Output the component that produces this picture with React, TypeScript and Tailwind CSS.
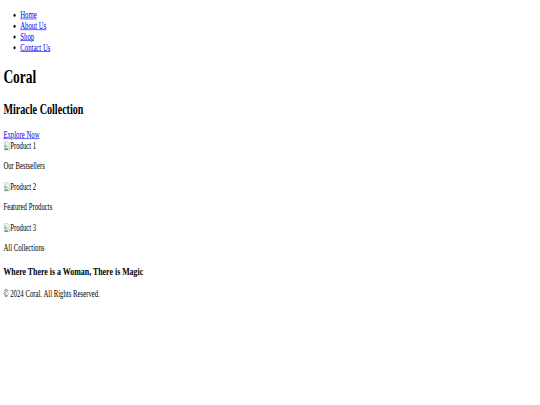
import type { ReactNode } from "react";

// Icône « image cassée » façon Chrome (16x16)
function BrokenImg({ alt }: { alt: string }) {
  return (
    <span>
      <svg width="16" height="16" viewBox="0 0 16 16" className="inline align-[-3px]">
        <path d="M1.5 1.5h10l3 3v4l-3 2-3-2-3 2-3-2-1 .7z" fill="#eef3f8" stroke="#a8b4c0" />
        <path d="M1.5 11.5l3-2 3 2 3-2 3 2 1-.7v4.7h-13z" fill="#eef3f8" stroke="#a8b4c0" />
        <path d="M2 15l3.5-3.5 2 1.5 2-1L12 15z" fill="#3aa655" />
        <circle cx="5" cy="5" r="1.3" fill="#b9d3ea" />
        <path d="M2 9l3-3 3 2.5-3 2z" fill="#6fbf73" />
      </svg>
      {alt}
    </span>
  );
}

function Product({ alt, label }: { alt: string; label: string }) {
  return (
    <div>
      <BrokenImg alt={alt} />
      <p className="my-4">{label}</p>
    </div>
  );
}

function Link({ children }: { children: ReactNode }) {
  return <a href="#" className="text-[#0000ee] underline">{children}</a>;
}

export default function App() {
  return (
    /* Page rendue à 1280px de large puis réduite au format de la capture */
    <div className="w-[540px] h-[405px] overflow-hidden bg-white">
      <div
        className="w-[1280px] flow-root px-2 origin-top-left scale-x-[0.421875] scale-y-[0.602] text-black text-[16px] leading-[normal]"
        style={{ fontFamily: '"Liberation Serif", "Times New Roman", serif' }}
      >
        <nav>
          <ul className="my-4 pl-10 list-disc">
            <li><Link>Home</Link></li>
            <li><Link>About Us</Link></li>
            <li><Link>Shop</Link></li>
            <li><Link>Contact Us</Link></li>
          </ul>
        </nav>

        <section>
          <h1 className="text-[32px] font-bold my-[21.44px]">Coral</h1>
          <h2 className="text-[24px] font-bold my-[19.92px]">Miracle Collection</h2>
          <Link>Explore Now</Link>
        </section>

        <section>
          <Product alt="Product 1" label="Our Bestsellers" />
          <Product alt="Product 2" label="Featured Products" />
          <Product alt="Product 3" label="All Collections" />
        </section>

        <section>
          <h3 className="text-[18.72px] font-bold my-[18.72px]">Where There is a Woman, There is Magic</h3>
        </section>

        <footer>
          <p className="my-4">© 2024 Coral. All Rights Reserved.</p>
        </footer>
      </div>
    </div>
  );
}
